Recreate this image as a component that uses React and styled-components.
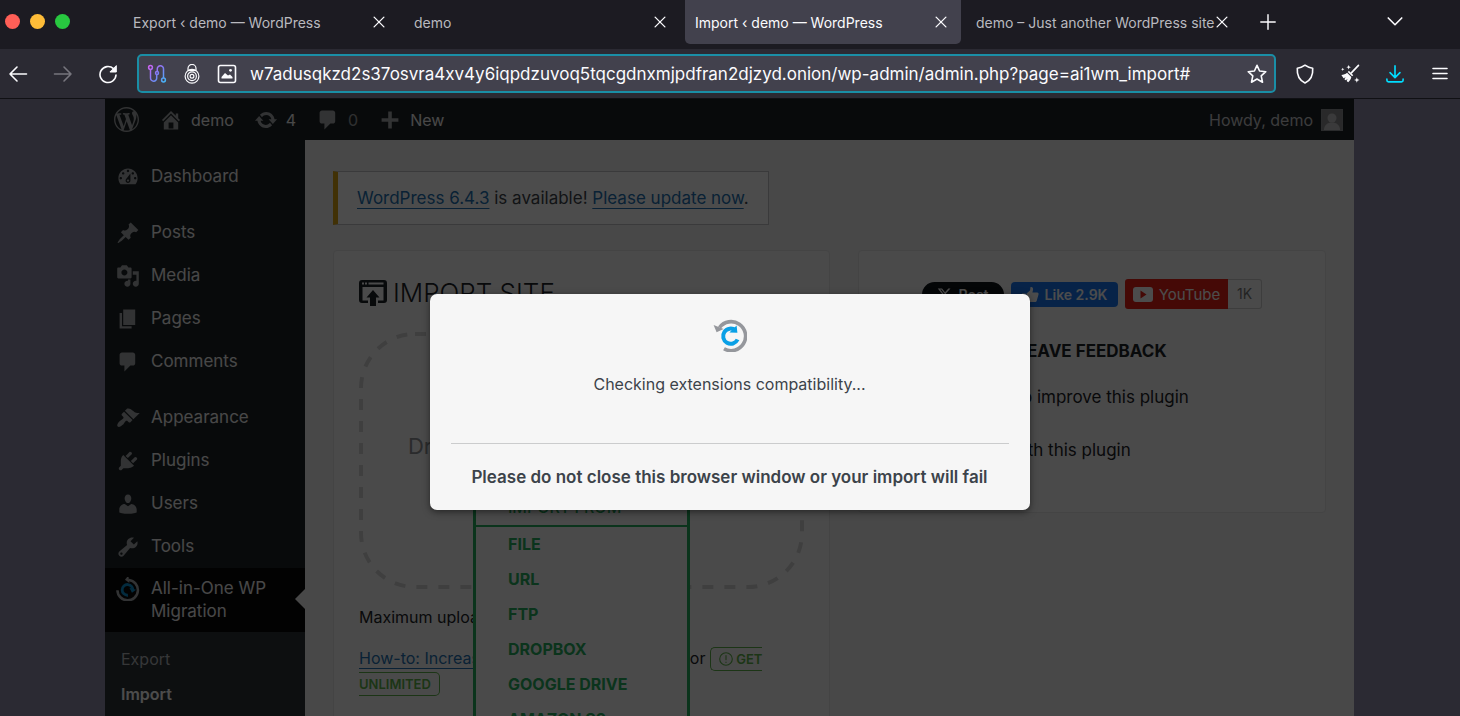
import styled, { createGlobalStyle } from "styled-components";

const GlobalStyle = createGlobalStyle`
  * {
    box-sizing: border-box;
  }
  body {
    margin: 0;
    background: #2b2a33;
    font-family: Inter, "Liberation Sans", sans-serif;
  }
  button,
  input {
    font-family: inherit;
  }
`;

/* ---------- icons ---------- */

const paths = {
  wordpress:
    "M20 10c0-5.51-4.49-10-10-10C4.48 0 0 4.49 0 10c0 5.52 4.48 10 10 10 5.51 0 10-4.48 10-10zM7.78 15.37L4.37 6.22c.55-.02 1.17-.08 1.17-.08.5-.06.44-1.13-.06-1.11 0 0-1.45.11-2.37.11-.18 0-.37 0-.58-.01C4.12 2.69 6.87 1.11 10 1.11c2.33 0 4.45.87 6.05 2.34-.68-.11-1.65.39-1.65 1.58 0 .74.45 1.36.9 2.1.35.61.55 1.36.55 2.46 0 1.49-1.4 5-1.4 5l-3.03-8.37c.54-.02.82-.17.82-.17.5-.05.44-1.25-.06-1.22 0 0-1.44.12-2.38.12-.87 0-2.33-.12-2.33-.12-.5-.03-.56 1.2-.06 1.22l.92.08 1.26 3.41zM17.41 10c.24-.64.74-1.87.43-4.25.7 1.29 1.05 2.71 1.05 4.25 0 3.29-1.73 6.24-4.4 7.78.97-2.59 1.94-5.2 2.92-7.78zM6.1 18.09C3.12 16.65 1.11 13.53 1.11 10c0-1.3.23-2.48.72-3.59C3.25 10.3 4.67 14.2 6.1 18.09zm4.03-6.63l2.58 6.98c-.86.29-1.76.45-2.71.45-.79 0-1.57-.11-2.29-.33.81-2.38 1.62-4.74 2.42-7.1z",
  home: "M16 8.5l1.53 1.53-1.06 1.06L10 4.6l-6.47 6.49-1.06-1.06L10 2.5l4 4v-2h2v4zm-6-2.46l6 5.99V18H4v-5.97zM12 17v-5H8v5h4z",
  update:
    "M10.2 3.28c3.53 0 6.43 2.61 6.92 6h2.08l-3.5 4-3.5-4h2.32c-.45-1.97-2.21-3.45-4.32-3.45-1.45 0-2.73.71-3.54 1.78L4.95 5.66C6.23 4.2 8.11 3.28 10.2 3.28zm-.4 13.44c-3.52 0-6.43-2.61-6.92-6H.8l3.5-4c1.17 1.33 2.33 2.67 3.5 4H5.48c.45 1.97 2.21 3.45 4.32 3.45 1.45 0 2.73-.71 3.54-1.78l1.71 1.95c-1.28 1.46-3.15 2.38-5.25 2.38z",
  comments:
    "M5 2h9c1.1 0 2 .9 2 2v7c0 1.1-.9 2-2 2h-2l-5 5v-5H5c-1.1 0-2-.9-2-2V4c0-1.1.9-2 2-2z",
  plus: "M17 8.5v3h-5.5V17h-3v-5.500H3v-3h5.500V3h3v5.500z",
  dashboard:
    "M3.76 16h12.48c1.1-1.37 1.76-3.11 1.76-5 0-4.42-3.58-8-8-8s-8 3.58-8 8c0 1.89.66 3.63 1.76 5zM10 4c.55 0 1 .45 1 1s-.45 1-1 1-1-.45-1-1 .45-1 1-1zM6 6c.55 0 1 .45 1 1s-.45 1-1 1-1-.45-1-1 .45-1 1-1zm8 0c.55 0 1 .45 1 1s-.45 1-1 1-1-.45-1-1 .45-1 1-1zm-5.370 5.550L12 7v6c0 1.100-.9 2-2 2s-2-.9-2-2c0-.570.240-1.080.630-1.450zM4 10c.55 0 1 .45 1 1s-.45 1-1 1-1-.45-1-1 .45-1 1-1zm12 0c.55 0 1 .45 1 1s-.45 1-1 1-1-.45-1-1 .45-1 1-1zm-5 3c0-.55-.45-1-1-1s-1 .45-1 1 .45 1 1 1 1-.45 1-1z",
  posts:
    "M10.44 3.02l1.82-1.82 6.36 6.35-1.83 1.82c-1.05-.68-2.48-.57-3.41.36l-.75.75c-.92.93-1.04 2.35-.35 3.41l-1.83 1.82-2.41-2.41-2.8 2.79c-.42.42-3.38 2.71-3.8 2.29s1.86-3.39 2.28-3.81l2.79-2.79L4.1 9.36l1.83-1.82c1.05.69 2.48.57 3.4-.36l.75-.75c.93-.92 1.05-2.35.36-3.41z",
  media:
    "M13 11V4c0-.55-.45-1-1-1h-1.67L9 1H5L3.67 3H2c-.55 0-1 .45-1 1v7c0 .55.45 1 1 1h10c.55 0 1-.45 1-1zM7 4.5c1.38 0 2.5 1.12 2.5 2.5S8.38 9.5 7 9.5 4.5 8.38 4.5 7 5.62 4.5 7 4.5zM14 6h5v10.5c0 1.38-1.12 2.5-2.5 2.5S14 17.88 14 16.5s1.12-2.5 2.5-2.5c.17 0 .34.02.5.05V9h-3V6zm-4 8.05V13h2v3.5c0 1.38-1.12 2.5-2.5 2.5S7 17.88 7 16.5 8.12 14 9.5 14c.17 0 .34.02.5.05z",
  pages: "M6 15V2h10v13H6zm-1 1h8v2H3V5h2v11z",
  appearance:
    "M14.48 11.06L7.41 3.99l1.5-1.5c.5-.56 2.3-.47 3.51.32 1.21.8 1.43 1.28 2.91 2.1 1.18.64 2.45 1.26 4.45.85zm-.71.71L6.7 4.7 4.93 6.47c-.39.39-.39 1.02 0 1.41l1.06 1.06c.39.39.39 1.03 0 1.42-.6.6-1.43 1.11-2.21 1.69-.35.26-.7.53-1.01.84C1.43 14.23.4 16.08 1.4 17.07c.99 1 2.84-.03 4.18-1.36.31-.31.58-.66.85-1.02.57-.78 1.08-1.61 1.69-2.21.39-.39 1.02-.39 1.41 0l1.06 1.06c.39.39 1.02.39 1.41 0z",
  plugins:
    "M13.11 4.36L9.87 7.6 8 5.73l3.24-3.24c.35-.34 1.05-.2 1.56.32.52.51.66 1.21.31 1.55zm-8 1.77l.91-1.12 9.01 9.01-1.19.84c-.71.71-2.63 1.16-3.82 1.16H6.14L4.9 17.26c-.59.59-1.54.59-2.12 0-.59-.58-.59-1.53 0-2.12l1.24-1.24v-3.88c0-1.13.4-3.19 1.09-3.89zm7.26 3.97l3.24-3.24c.34-.35 1.04-.21 1.55.31.52.51.66 1.21.31 1.55l-3.24 3.25z",
  users:
    "M10 9.25c-2.27 0-2.73-3.44-2.73-3.44C7 4.02 7.82 2 9.97 2c2.16 0 2.98 2.02 2.71 3.81 0 0-.41 3.44-2.68 3.44zm0 2.57L12.72 10c2.39 0 4.52 2.33 4.52 4.53v2.49s-3.65 1.13-7.24 1.13c-3.65 0-7.24-1.13-7.24-1.13v-2.49c0-2.25 1.94-4.48 4.47-4.48z",
  tools:
    "M16.68 9.77c-1.34 1.34-3.3 1.67-4.95.99l-5.41 6.52c-.99.99-2.59.99-3.58 0s-.99-2.59 0-3.57l6.52-5.42c-.68-1.65-.35-3.61.99-4.95 1.28-1.28 3.12-1.62 4.72-1.06l-2.89 2.89 2.82 2.82 2.86-2.87c.53 1.58.18 3.39-1.08 4.65zM3.81 16.21c.4.39 1.04.39 1.43 0 .4-.4.4-1.04 0-1.43-.39-.4-1.03-.4-1.43 0-.39.39-.39 1.03 0 1.43z",
};

const Svg = styled.svg`
  display: block;
  flex: none;
`;

function Dashicon({ name, size = 24 }) {
  return (
    <Svg width={size} height={size} viewBox="0 0 20 20" fill="currentColor" aria-hidden="true">
      <path fillRule="evenodd" d={paths[name]} />
    </Svg>
  );
}

function Line({ size = 20, width = 1.6, children }) {
  return (
    <Svg
      width={size}
      height={size}
      viewBox="0 0 20 20"
      fill="none"
      stroke="currentColor"
      strokeWidth={width}
      strokeLinecap="round"
      strokeLinejoin="round"
      aria-hidden="true"
    >
      {children}
    </Svg>
  );
}

function CircuitIcon() {
  return (
    <Svg width="20" height="20" viewBox="0 0 20 20" fill="none" strokeWidth="1.500" aria-hidden="true">
      <defs>
        <linearGradient id="circuit" x1="0" y1="0" x2="20" y2="20" gradientUnits="userSpaceOnUse">
          <stop offset="0" stopColor="#e05cf0" />
          <stop offset=".5" stopColor="#7f7df5" />
          <stop offset="1" stopColor="#35c4f5" />
        </linearGradient>
      </defs>
      <g stroke="url(#circuit)">
        <circle cx="3.500" cy="3.500" r="1.900" />
        <circle cx="16.500" cy="16" r="1.900" />
        <circle cx="10" cy="9" r="1.500" />
        <path d="M3.500 5.400V14a3.100 3.100 0 0 0 3.200 3.200A3.100 3.100 0 0 0 9.700 14v-3.500M10.300 7.500V5a3.100 3.100 0 0 1 3.100-3.300A3.100 3.100 0 0 1 16.500 5v9" />
      </g>
    </Svg>
  );
}

function OnionLockIcon() {
  return (
    <Svg width="18" height="20" viewBox="0 0 18 20" fill="none" stroke="#fbfbfe" strokeWidth="1.200" aria-hidden="true">
      <path d="M5 6.500V4.400a4 4 0 0 1 8 0v2.100" />
      <circle cx="9" cy="12.300" r="6.900" />
      <circle cx="9" cy="12.300" r="4.400" />
      <circle cx="9" cy="12.300" r="1.900" />
      <path d="M4.800 6.500h8.400" />
    </Svg>
  );
}

function PictureIcon() {
  return (
    <Line>
      <rect x="1.500" y="1.500" width="17" height="17" rx="2" />
      <path d="M4.500 13l3.500-4 3 2.500 2-1 2.500 2.500v1.500h-11z" fill="currentColor" stroke="none" />
      <circle cx="13.500" cy="6.300" r="1.400" fill="currentColor" stroke="none" />
    </Line>
  );
}

function BroomIcon() {
  return (
    <Svg width="20" height="20" viewBox="0 0 22 22" fill="#fbfbfe" aria-hidden="true">
      <path d="M20.300 1.500L12.500 9.700" stroke="#fbfbfe" strokeWidth="1.800" strokeLinecap="round" />
      <path d="M9.800 7.500l4.800 4.800-1.300 1.200-4.700-4.800z" />
      <path d="M7.800 9.600l4.700 4.700c-.5 2.200-1.500 4-3.500 5.700l-1.700-1.300 1-2.300-2 1.600-1.500-1.300 1.400-2.200-2.300 1.300L1.500 12c2.500-.200 4.500-.800 6.300-2.400z" />
      <path d="M9.500 1l.7 1.800 1.800.7-1.800.7-.7 1.800-.7-1.800L7 3.500l1.800-.7zM18.500 14.500l.8 2.200 2.200.8-2.200.8-.8 2.200-.8-2.200-2.200-.8 2.200-.8zM3 4l.5 1.300 1.300.5-1.300.5L3 7.600l-.5-1.300-1.300-.5 1.300-.5z" />
    </Svg>
  );
}

/* circular arrows, outer grey and inner blue; turns while the import runs */
function MigrationLogo({ size, outer, inner, angle = 0 }) {
  return (
    <Svg width={size} height={size} viewBox="0 0 34 34" fill="none" aria-hidden="true">
      <g transform={`rotate(${angle} 17 17)`}>
        <path d="M6.500 9.500A14.500 14.500 0 1 1 11 30.800" stroke={outer} strokeWidth="3.600" />
        <path d="M.6 7l3 7.200 7-3.200z" fill={outer} />
        <path d="M22.500 12.300A7.600 7.600 0 1 0 24.600 21.500" stroke={inner} strokeWidth="4" />
        <path d="M23.600 7.600l.8 7.200-8-.4z" fill={inner} />
      </g>
    </Svg>
  );
}

/* ---------- browser chrome ---------- */

const Shell = styled.div`
  display: flex;
  flex-direction: column;
  height: 100vh;
  overflow: hidden;
`;

const TabBar = styled.header`
  display: flex;
  height: 49px;
  flex: none;
  padding-left: 5px;
  background: #1c1b22;
  color: #fbfbfe;
`;

const Lights = styled.div`
  display: flex;
  gap: 10px;
  width: 118px;
  flex: none;
  padding-top: 14px;
`;

const Light = styled.span`
  width: 15px;
  height: 15px;
  border-radius: 50%;
  background: ${(p) => p.$color};
`;

const Tabs = styled.div`
  display: flex;
  gap: 5px;
  flex: 0 1 1119px;
  min-width: 0;
`;

const Tab = styled.div`
  display: flex;
  align-items: center;
  flex: 1;
  min-width: 0;
  height: 44px;
  padding: 0 10px;
  border-radius: 0 0 5px 5px;
  background: ${(p) => (p.$active ? "#42414d" : "transparent")};
  color: ${(p) => (p.$active ? "#fbfbfe" : "#b9b9bf")};
  font-size: 14px;
`;

const TabTitle = styled.span`
  flex: 1;
  min-width: 0;
  white-space: nowrap;
`;

const IconButton = styled.button`
  display: flex;
  align-items: center;
  justify-content: center;
  flex: none;
  width: ${(p) => p.$width || 36}px;
  padding: 0;
  border: 0;
  background: none;
  color: ${(p) => p.$color || "#fbfbfe"};
`;

const TabTools = styled.div`
  display: flex;
  flex: 1;
  justify-content: space-between;
  height: 44px;
  padding: 0 47px 0 8px;
`;

const Toolbar = styled.nav`
  display: flex;
  gap: 9px;
  height: 50px;
  flex: none;
  padding: 5px 2px 5px 0;
  border-bottom: 1px solid #101014;
  background: #2b2a33;
`;

const UrlBar = styled.div`
  display: flex;
  align-items: center;
  gap: 16px;
  flex: 1;
  min-width: 0;
  margin: 0 2px;
  padding: 0 7px 0 8px;
  border: 2px solid #1a8ea6;
  border-radius: 5px;
  background: #42414d;
  color: #fbfbfe;
`;

const UrlInput = styled.input`
  flex: 1;
  min-width: 0;
  margin-left: -3px;
  padding: 0;
  border: 0;
  outline: 0;
  background: none;
  color: #fbfbfe;
  font-size: 17px;
`;

/* ---------- wordpress page ---------- */

const Gutter = styled.div`
  flex: 1;
  min-height: 0;
  padding: 0 106px 0 105px;
`;

const Page = styled.div`
  position: relative;
  display: flex;
  flex-direction: column;
  height: 100%;
  overflow: hidden;
  background: #f0f0f1;
  color: #3c434a;
  font-size: 17px;
`;

const AdminBar = styled.div`
  display: flex;
  align-items: center;
  height: 41px;
  flex: none;
  padding: 0 11px 0 9px;
  background: #1d2327;
  color: #f0f0f1;
  font-size: 16px;
`;

const AdminItem = styled.a`
  display: flex;
  align-items: center;
  gap: 8px;
  margin-right: 20px;
  color: inherit;
  text-decoration: none;

  svg {
    color: #a7aaad;
  }
`;

const Account = styled.a`
  display: flex;
  align-items: center;
  gap: 8px;
  margin-left: auto;
  color: #c8c9cb;
  text-decoration: none;
`;

const Dim = styled.span`
  opacity: 0.6;
`;

const Body = styled.div`
  display: flex;
  flex: 1;
  min-height: 0;
`;

const SideMenu = styled.nav`
  width: 200px;
  flex: none;
  padding-top: 15px;
  background: #1d2327;
`;

const MenuGroup = styled.div`
  & + & {
    margin-top: 13px;
  }
`;

const MenuItem = styled.a`
  display: flex;
  align-items: ${(p) => (p.$current ? "flex-start" : "center")};
  gap: 11px;
  position: relative;
  min-height: 43px;
  padding: ${(p) => (p.$current ? "9px 11px" : "0 11px")};
  background: ${(p) => (p.$current ? "#090909" : "transparent")};
  color: #f0f0f1;
  line-height: 23px;
  text-decoration: none;

  svg {
    color: #a7aaad;
  }

  &::after {
    content: "";
    display: ${(p) => (p.$current ? "block" : "none")};
    position: absolute;
    top: 21px;
    right: 0;
    border: 10px solid transparent;
    border-left: 0;
    border-right-color: #f0f0f1;
  }
`;

const SubMenu = styled.div`
  height: 100%;
  padding: 10px 16px;
  background: #2c3338;
`;

const SubItem = styled.a`
  display: block;
  color: ${(p) => (p.$current ? "#fff" : "#b4b8bc")};
  font-size: 16px;
  font-weight: ${(p) => (p.$current ? 600 : 400)};
  line-height: 35px;
  text-decoration: none;
`;

const Content = styled.main`
  flex: 1;
  min-width: 0;
  padding: 31px 28px 0 28px;
`;

const Notice = styled.div`
  width: fit-content;
  padding: 0 19px;
  border: 1px solid #c3c4c7;
  border-left: 5px solid #dba617;
  background: #fff;
  line-height: 52px;
`;

const Link = styled.a`
  color: #2271b1;
  text-decoration: underline;
  text-underline-offset: 4px;
`;

const Columns = styled.div`
  display: grid;
  grid-template-columns: minmax(0, 1fr) minmax(0, 468px);
  align-items: start;
  gap: 28px;
  margin-top: 25px;
`;

const Panel = styled.section`
  min-height: ${(p) => p.$height}px;
  padding: 28px 25px 20px;
  border: 1px solid #e3e3e4;
  border-radius: 4px;
  background: #f9f9f9;
`;

const Title = styled.h1`
  display: flex;
  align-items: center;
  gap: 6px;
  margin: 0;
  color: #1d2327;
  font-size: 26px;
  font-weight: 300;
  line-height: 28px;
`;

const DropZone = styled.div`
  position: relative;
  height: 257px;
  margin-top: 25px;
  padding-top: 98px;
  color: #8c8f94;
  font-size: 22px;
  line-height: 32px;
  text-align: center;
`;

const DropFrame = styled.svg`
  position: absolute;
  inset: 0;
  width: 100%;
  height: 100%;

  rect {
    width: calc(100% - 4px);
    height: calc(100% - 4px);
  }
`;

const DropMenu = styled.ul`
  position: absolute;
  top: 155px;
  left: 114px;
  z-index: 1;
  width: 217px;
  margin: 0;
  padding: 0;
  border: 3px solid #27ae60;
  border-radius: 5px;
  background: #f9f9f9;
  list-style: none;
  text-align: left;
`;

const DropMenuItem = styled.li`
  padding-left: 32px;
  border-bottom: ${(p) => (p.$head ? "2px solid #27ae60" : "0")};
  color: #27ae60;
  font-size: 16px;
  font-weight: ${(p) => (p.$head ? 500 : 700)};
  line-height: 35px;
`;

const Note = styled.p`
  margin: 16px 0 0;
  color: #1d2327;
  font-size: 16px;
  line-height: 25px;
`;

const Unlimited = styled.a`
  padding: 3px 8px;
  border: 1px solid #5eb34a;
  border-radius: 5px;
  color: #5eb34a;
  font-size: 13px;
  font-weight: 600;
  line-height: 16px;
  text-decoration: none;

  svg {
    display: inline-block;
    vertical-align: -2px;
  }
`;

const Social = styled.div`
  display: flex;
  align-items: center;
  justify-content: center;
  gap: 7px;
`;

const SocialLink = styled.a`
  display: flex;
  align-items: center;
  justify-content: center;
  gap: 6px;
  width: ${(p) => p.$width}px;
  height: ${(p) => p.$height}px;
  border-radius: ${(p) => p.$radius};
  background: ${(p) => p.$bg};
  color: #fff;
  font-size: ${(p) => p.$size || 14}px;
  font-weight: ${(p) => p.$weight || 600};
  text-decoration: none;
`;

const YouTube = styled.div`
  display: flex;
`;

const Count = styled.span`
  width: 34px;
  border: 1px solid #ccc;
  border-left: 0;
  border-radius: 0 3px 3px 0;
  color: #777;
  font-size: 14px;
  line-height: 28px;
  text-align: center;
`;

const FeedbackTitle = styled.h2`
  margin: 30px 0 22px;
  color: #1d2327;
  font-size: 17px;
  font-weight: 700;
  line-height: 24px;
  text-align: center;
`;

const Choice = styled.label`
  display: flex;
  align-items: center;
  gap: 12px;
  height: 24px;
  margin-bottom: 29px;
  color: #1d2327;
  font-size: 17px;

  input {
    width: 20px;
    height: 20px;
    margin: 0;
  }
`;

const Overlay = styled.div`
  position: absolute;
  inset: 0;
  z-index: 2;
  display: flex;
  align-items: center;
  justify-content: center;
  padding-bottom: 12px;
  background: rgba(0, 0, 0, 0.7);
`;

const Modal = styled.div`
  width: 600px;
  max-width: 100%;
  padding: 24px 21px 20px;
  border-radius: 7px;
  background: #f6f6f6;
  box-shadow: 0 2px 7px rgba(0, 0, 0, 0.5);
  color: #3c434a;
  font-size: 16px;
  line-height: 26px;
  text-align: center;

  svg {
    margin: 0 auto;
  }
`;

const Status = styled.p`
  margin: 19px 0 46px;
`;

const Warning = styled.p`
  margin: 0;
  padding-top: 20px;
  border-top: 1px solid #cbcccd;
  font-size: 17px;
  font-weight: 600;
`;

const tabs = [
  "Export ‹ demo — WordPress",
  "demo",
  "Import ‹ demo — WordPress",
  "demo – Just another WordPress site",
];

const menu = [
  [["dashboard", "Dashboard"]],
  [
    ["posts", "Posts"],
    ["media", "Media"],
    ["pages", "Pages"],
    ["comments", "Comments"],
  ],
  [
    ["appearance", "Appearance"],
    ["plugins", "Plugins"],
    ["users", "Users"],
    ["tools", "Tools"],
  ],
];

const sources = ["FILE", "URL", "FTP", "DROPBOX", "GOOGLE DRIVE", "AMAZON S3"];

function BrowserTop() {
  return (
    <>
      <TabBar>
        <Lights>
          <Light $color="#ff5f57" />
          <Light $color="#febc38" />
          <Light $color="#28c840" />
        </Lights>
        <Tabs>
          {tabs.map((title, i) => (
            <Tab key={title} $active={i === 2}>
              <TabTitle>{title}</TabTitle>
              <IconButton $width={20} aria-label="Close tab">
                <Line size={14} width={1.9}>
                  <path d="M3 3l14 14M17 3L3 17" />
                </Line>
              </IconButton>
            </Tab>
          ))}
        </Tabs>
        <TabTools>
          <IconButton aria-label="New tab">
            <Line size={18}>
              <path d="M10 2v16M2 10h16" />
            </Line>
          </IconButton>
          <IconButton aria-label="List all tabs">
            <Line size={18} width={1.8}>
              <path d="M2.500 5.500l7.500 7.500 7.500-7.500" />
            </Line>
          </IconButton>
        </TabTools>
      </TabBar>
      <Toolbar>
        <IconButton aria-label="Back">
          <Line>
            <path d="M18.500 10H2M9 3l-7 7 7 7" />
          </Line>
        </IconButton>
        <IconButton aria-label="Forward" $color="#77767e">
          <Line>
            <path d="M1.500 10H18M11 3l7 7-7 7" />
          </Line>
        </IconButton>
        <IconButton aria-label="Reload">
          <Line>
            <path d="M18 11A8 8 0 1 1 15.500 4.700l1 1" />
            <path d="M18.300 2v6h-6z" fill="currentColor" strokeWidth="1" />
          </Line>
        </IconButton>
        <UrlBar>
          <CircuitIcon />
          <OnionLockIcon />
          <PictureIcon />
          <UrlInput
            aria-label="Address"
            readOnly
            value="w7adusqkzd2s37osvra4xv4y6iqpdzuvoq5tqcgdnxmjpdfran2djzyd.onion/wp-admin/admin.php?page=ai1wm_import#"
          />
          <IconButton $width={20} aria-label="Bookmark">
            <Line>
              <path d="M10 1.300l2.600 5.700 6.200.7-4.600 4.200 1.300 6.300-5.500-3.200-5.500 3.200 1.300-6.300L1.200 7.700l6.200-.7z" />
            </Line>
          </IconButton>
        </UrlBar>
        <IconButton aria-label="Security level">
          <Line>
            <path d="M10 1.200c2.600 1.900 5 2.800 7.700 3 .5 6.800-2 12-7.700 14.800C4.300 16.200 1.800 11 2.300 4.200c2.700-.2 5.100-1.100 7.700-3z" />
          </Line>
        </IconButton>
        <IconButton aria-label="New identity">
          <BroomIcon />
        </IconButton>
        <IconButton aria-label="Downloads" $color="#00ddff">
          <Line size={18} width={1.8}>
            <path d="M10 1v12.500M4.500 8.500l5.500 5.500 5.500-5.500M1 15.500v1.500a1.800 1.800 0 0 0 1.800 1.800h14.400A1.800 1.800 0 0 0 19 17v-1.500" />
          </Line>
        </IconButton>
        <IconButton aria-label="Menu">
          <Line>
            <path d="M3 4.500h14M3 9.500h14M3 14.500h14" />
          </Line>
        </IconButton>
      </Toolbar>
    </>
  );
}

function SideBar() {
  return (
    <SideMenu>
      {menu.map((group, i) => (
        <MenuGroup key={i}>
          {group.map(([icon, label]) => (
            <MenuItem key={label} href="#">
              <Dashicon name={icon} />
              {label}
            </MenuItem>
          ))}
        </MenuGroup>
      ))}
      <MenuItem href="#" $current>
        <MigrationLogo size={24} outer="#a7aaad" inner="#0a8fd0" angle={60} />
        All-in-One WP Migration
      </MenuItem>
      <SubMenu>
        <SubItem href="#">Export</SubItem>
        <SubItem href="#" $current>
          Import
        </SubItem>
      </SubMenu>
    </SideMenu>
  );
}

function ImportPanel() {
  return (
    <Panel $height={500}>
      <Title>
        <Svg width="28" height="26" viewBox="0 0 28 26" fill="#1d2327" aria-hidden="true">
          <path
            fillRule="evenodd"
            d="M3 0h22a3 3 0 0 1 3 3v17a3 3 0 0 1-3 3h-6v-2.500h5.500V7h-21v13.500H9V23H3a3 3 0 0 1-3-3V3a3 3 0 0 1 3-3zM3 2.500v2h2v-2zM6 2.500v2h2v-2zM9.500 2.500v2h15v-2z"
          />
          <path d="M14 10l6.500 7.500H17V26h-6v-8.500H7.500z" />
        </Svg>
        IMPORT SITE
      </Title>
      <DropZone>
        <DropFrame aria-hidden="true">
          <rect x="2" y="2" rx="54" fill="none" stroke="#d3d3d4" strokeWidth="4" strokeDasharray="11 11" />
        </DropFrame>
        Drag &amp; Drop a backup to import it
        <DropMenu>
          <DropMenuItem $head>IMPORT FROM</DropMenuItem>
          {sources.map((name) => (
            <DropMenuItem key={name}>{name}</DropMenuItem>
          ))}
        </DropMenu>
      </DropZone>
      <Note>
        Maximum upload file size: <b>512 MB</b>.
      </Note>
      <Note>
        <Link href="#">How-to: Increase maximum upload file size</Link> or{" "}
        <Unlimited href="#">
          <Line size={14}>
            <circle cx="10" cy="10" r="9" />
            <path d="M10 5v6M10 14.500v.5" />
          </Line>{" "}
          GET UNLIMITED
        </Unlimited>
      </Note>
    </Panel>
  );
}

function FeedbackPanel() {
  return (
    <Panel $height={263}>
      <Social>
        <SocialLink href="#" $width={82} $height={25} $radius="13px" $bg="#0f1419">
          <Svg width="15" height="15" viewBox="0 0 24 24" fill="#fff" aria-hidden="true">
            <path
              fillRule="evenodd"
              d="M18.240 2.250h3.310l-7.230 8.260 8.500 11.240h-6.650l-5.220-6.820-5.960 6.820H1.680l7.730-8.840L1.250 2.250h6.830l4.710 6.230zm-1.160 17.520h1.830L7.080 4.130H5.120z"
            />
          </Svg>
          Post
        </SocialLink>
        <SocialLink href="#" $width={107} $height={25} $radius="4px" $bg="#1877f2">
          <Svg width="17" height="17" viewBox="0 0 17 17" fill="#fff" aria-hidden="true">
            <path d="M0 7.500h3.500V16H0zM4.500 7.500L8 4.500 8.500 1C10.500.500 11.500 2 11 4l-.6 2.500h4.800c1.200 0 1.600 1 1.300 2l-1.700 6c-.3 1-1 1.500-2 1.500H7l-2.500-1z" />
          </Svg>
          Like 2.9K
        </SocialLink>
        <YouTube>
          <SocialLink href="#" $width={103} $height={30} $radius="3px 0 0 3px" $bg="#e62117" $size={15} $weight={400}>
            <Svg width="20" height="15" viewBox="0 0 20 15" aria-hidden="true">
              <rect width="20" height="15" rx="3" fill="#fff" />
              <path d="M7.500 3.500l6 4-6 4z" fill="#e62117" />
            </Svg>
            YouTube
          </SocialLink>
          <Count>1K</Count>
        </YouTube>
      </Social>
      <FeedbackTitle>LEAVE FEEDBACK</FeedbackTitle>
      <Choice>
        <input type="radio" name="feedback" />
        I have ideas to improve this plugin
      </Choice>
      <Choice>
        <input type="radio" name="feedback" />
        I need help with this plugin
      </Choice>
    </Panel>
  );
}

export default function App() {
  return (
    <Shell>
      <GlobalStyle />
      <BrowserTop />
      <Gutter>
        <Page>
          <AdminBar>
            <AdminItem href="#" aria-label="WordPress">
              <Dashicon name="wordpress" size={25} />
            </AdminItem>
            <AdminItem href="#">
              <Dashicon name="home" />
              demo
            </AdminItem>
            <AdminItem href="#">
              <Dashicon name="update" />4
            </AdminItem>
            <AdminItem href="#">
              <Dashicon name="comments" />
              <Dim>0</Dim>
            </AdminItem>
            <AdminItem href="#">
              <Dashicon name="plus" />
              New
            </AdminItem>
            <Account href="#">
              Howdy, demo
              <Svg width="22" height="22" viewBox="0 0 22 22" aria-hidden="true">
                <rect width="22" height="22" fill="#8c8f94" />
                <rect x="1" y="1" width="20" height="20" fill="#8a8a8c" />
                <circle cx="11" cy="9" r="4.500" fill="#c3c4c7" />
                <path d="M3 21c0-5 3.500-7.500 8-7.500s8 2.500 8 7.500z" fill="#c3c4c7" />
              </Svg>
            </Account>
          </AdminBar>
          <Body>
            <SideBar />
            <Content>
              <Notice>
                <Link href="#">WordPress 6.4.3</Link> is available! <Link href="#">Please update now</Link>.
              </Notice>
              <Columns>
                <ImportPanel />
                <FeedbackPanel />
              </Columns>
            </Content>
          </Body>
          <Overlay>
            <Modal role="dialog" aria-label="Import progress">
              <MigrationLogo size={34} outer="#95979c" inner="#0aa0e6" />
              <Status>Checking extensions compatibility...</Status>
              <Warning>Please do not close this browser window or your import will fail</Warning>
            </Modal>
          </Overlay>
        </Page>
      </Gutter>
    </Shell>
  );
}
